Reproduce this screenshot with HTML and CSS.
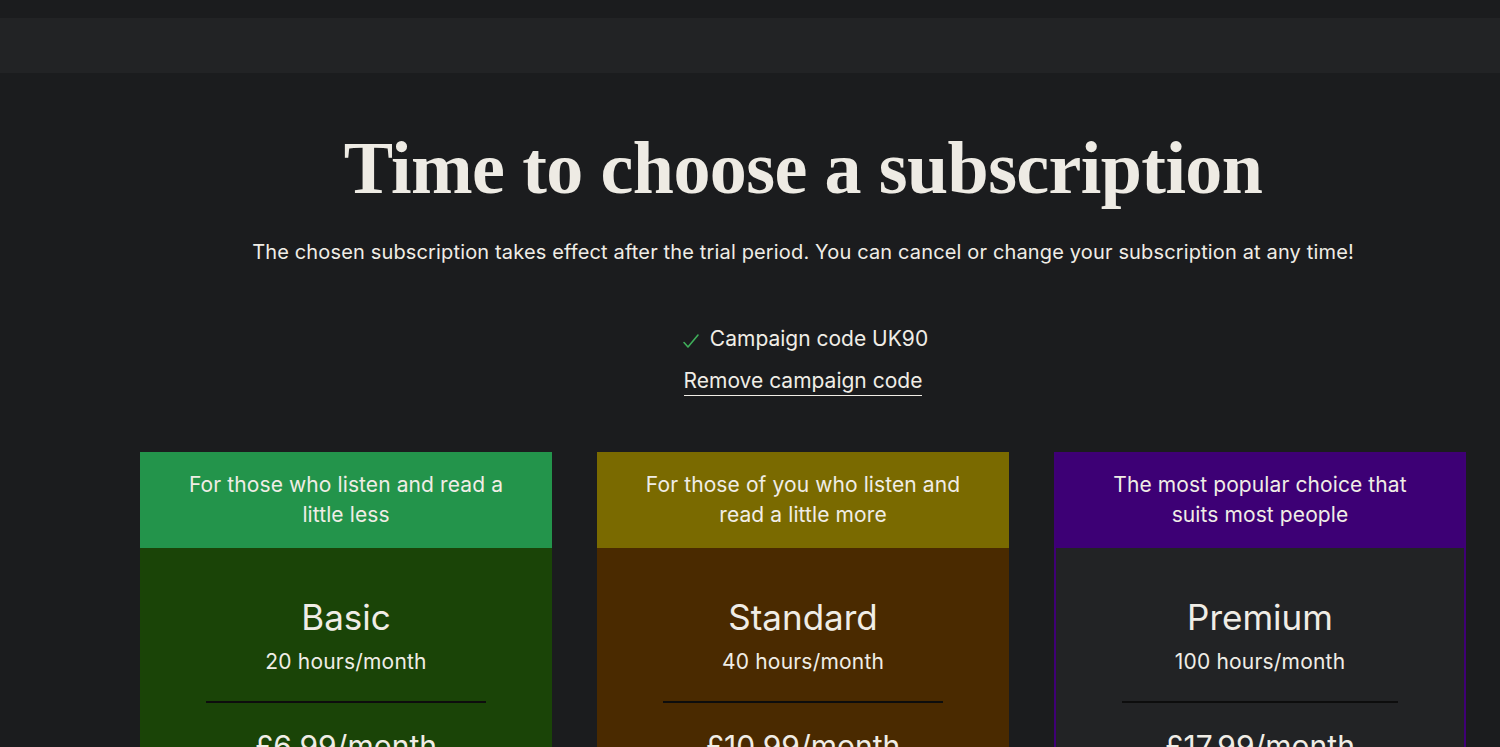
FILE: index.html
```html
<!DOCTYPE html>
<html lang="en">
<head>
<meta charset="utf-8">
<title>Time to choose a subscription</title>
<link rel="stylesheet" href="styles.css">
</head>
<body>
<div class="topstrip"></div>
<div class="topbar"></div>
<main class="main">
  <h1 class="title">Time to choose a subscription</h1>
  <p class="lead">The chosen subscription takes effect after the trial period. You can cancel or change your subscription at any time!</p>
  <div class="campaign">
    <div class="campaign-code">
      <svg class="check" viewBox="0 0 18 18" width="18" height="18" aria-hidden="true"><path d="M2 10.5 L6 15 L16 3" fill="none" stroke="#3fae5a" stroke-width="1.6" stroke-linecap="round" stroke-linejoin="round"/></svg>
      <span>Campaign code UK90</span>
    </div>
    <a class="remove" href="#">Remove campaign code</a>
  </div>
  <div class="plans">
    <section class="plan plan-basic">
      <div class="plan-head">For those who listen and read a little less</div>
      <div class="plan-body">
        <h2 class="plan-name">Basic</h2>
        <div class="plan-hours">20 hours/month</div>
        <hr class="plan-rule">
        <div class="plan-price">£6.99/month</div>
      </div>
    </section>
    <section class="plan plan-standard">
      <div class="plan-head">For those of you who listen and read a little more</div>
      <div class="plan-body">
        <h2 class="plan-name">Standard</h2>
        <div class="plan-hours">40 hours/month</div>
        <hr class="plan-rule">
        <div class="plan-price">£10.99/month</div>
      </div>
    </section>
    <section class="plan plan-premium">
      <div class="plan-head">The most popular choice that suits most people</div>
      <div class="plan-body">
        <h2 class="plan-name">Premium</h2>
        <div class="plan-hours">100 hours/month</div>
        <hr class="plan-rule">
        <div class="plan-price">£17.99/month</div>
      </div>
    </section>
  </div>
</main>
</body>
</html>
```
FILE: styles.css
```css
* { box-sizing: border-box; }
html, body { margin: 0; padding: 0; }
body {
  background: #1b1c1e;
  color: #f0ede6;
  font-family: Inter, "Liberation Sans", sans-serif;
  height: 747px;
  overflow: hidden;
}
.topstrip { height: 18px; background: #1b1c1e; }
.topbar { height: 55px; background: #222325; }
.main {
  padding-left: 106px;
  display: flex;
  flex-direction: column;
  align-items: center;
}
.title {
  margin: 50px 0 0;
  font-family: "Liberation Serif", serif;
  font-weight: 700;
  font-size: 74px;
  line-height: 90px;
  letter-spacing: -0.6px;
  color: #eeebe4;
}
.lead {
  margin: 24px 0 0;
  font-size: 20px;
  line-height: 30px;
  letter-spacing: 0.15px;
  color: #f0ede6;
}
.campaign {
  margin-top: 58px;
  display: flex;
  flex-direction: column;
  align-items: center;
  gap: 14px;
  font-size: 21px;
  line-height: 28px;
}
.campaign-code { display: flex; align-items: center; gap: 10px; margin-left: 4px; }
.check { margin-top: 4px; }
.remove {
  color: #f0ede6;
  text-decoration: none;
  border-bottom: 1px solid #f0ede6;
  line-height: 28px;
}
.plans {
  margin-top: 56px;
  display: flex;
  gap: 45px;
}
.plan {
  width: 412px;
  display: flex;
  flex-direction: column;
}
.plan-head {
  height: 96px;
  padding: 18px 46px 0;
  text-align: center;
  font-size: 21px;
  line-height: 30px;
  letter-spacing: 0.1px;
}
.plan-body {
  height: 300px;
  padding: 48px 66px 0;
  text-align: center;
}
.plan-name {
  margin: 0;
  font-weight: 400;
  font-size: 35px;
  line-height: 42px;
}
.plan-hours {
  margin-top: 10px;
  font-size: 21px;
  line-height: 28px;
  letter-spacing: 0.2px;
}
.plan-rule {
  margin: 25px 0 0;
  border: 0;
  height: 2px;
  background: #0d0d0d;
}
.plan-price {
  margin-top: 25px;
  font-size: 30px;
  line-height: 36px;
}
.plan-basic .plan-head { background: #23944b; }
.plan-basic .plan-body { background: #1a4407; }
.plan-standard .plan-head { background: #7a6a00; }
.plan-standard .plan-body { background: #4a2a00; }
.plan-premium { border: 2px solid #3f0076; border-bottom: 0; }
.plan-premium .plan-head { background: #3d0075; height: 94px; padding-top: 16px; }
.plan-premium .plan-body { background: #222325; }
```
